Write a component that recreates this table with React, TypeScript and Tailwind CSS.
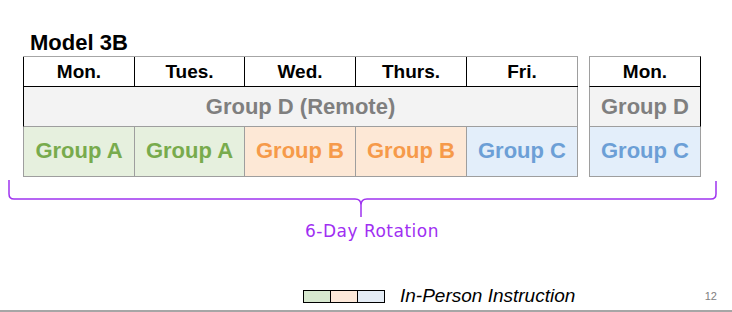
import React from "react";

const F = { fontFamily: '"Liberation Sans", Arial, sans-serif' };

export default function App() {
  return (
    <div className="relative w-[732px] h-[312px] overflow-hidden bg-white flex flex-col" style={F}>
      <div className="pt-[32px] pl-[30px] text-[22px] leading-[22px] font-bold text-black">Model 3B</div>

      <div className="mt-[2px] pl-[23px] flex gap-[11px]">
        {/* Table 1 */}
        <div className="w-[555px] flex flex-col">
          <div className="flex h-[31px] border-t border-b border-t-[#a6a6a6] border-b-black">
            {[
              ["Mon.", "w-[111px] border-l border-black"],
              ["Tues.", "w-[110px] border-l border-black"],
              ["Wed.", "w-[111px] border-l border-black"],
              ["Thurs.", "w-[111px] border-l border-black"],
              ["Fri.", "w-[112px] border-l border-r border-l-black border-r-[#9e9e9e]"],
            ].map(([t, c]) => (
              <div key={t} className={`${c} flex items-center justify-center text-[19px] leading-[19px] font-bold text-black`}>
                {t}
              </div>
            ))}
          </div>
          <div className="h-[40px] bg-[#f3f3f3] border-l border-r border-b border-l-black border-r-[#9e9e9e] border-b-[#9e9e9e] flex items-center justify-center text-[22px] leading-[22px] font-bold text-[#7f7f7f]">
            Group D (Remote)
          </div>
          <div className="flex h-[50px] border-b border-[#9e9e9e]">
            <div className="w-[111px] border-l border-[#9e9e9e] bg-[#e6f0de] flex items-center justify-center pb-[2px] text-[22px] leading-[22px] font-bold text-[#78ab4d]">Group A</div>
            <div className="w-[110px] border-l border-[#9e9e9e] bg-[#e6f0de] flex items-center justify-center pb-[2px] text-[22px] leading-[22px] font-bold text-[#78ab4d]">Group A</div>
            <div className="w-[111px] border-l border-[#9e9e9e] bg-[#fde8d6] flex items-center justify-center pb-[2px] text-[22px] leading-[22px] font-bold text-[#f69a4a]">Group B</div>
            <div className="w-[111px] border-l border-[#9e9e9e] bg-[#fde8d6] flex items-center justify-center pb-[2px] text-[22px] leading-[22px] font-bold text-[#f69a4a]">Group B</div>
            <div className="w-[112px] border-l border-r border-[#9e9e9e] bg-[#e3eefa] flex items-center justify-center pb-[2px] text-[22px] leading-[22px] font-bold text-[#6c9fd6]">Group C</div>
          </div>
        </div>

        {/* Table 2 */}
        <div className="w-[112px] flex flex-col">
          <div className="h-[31px] border-t border-b border-l border-r border-t-[#a6a6a6] border-b-black border-l-[#9e9e9e] border-r-black flex items-center justify-center text-[19px] leading-[19px] font-bold text-black">
            Mon.
          </div>
          <div className="h-[40px] bg-[#f3f3f3] border-l border-r border-b border-l-[#9e9e9e] border-r-black border-b-[#9e9e9e] flex items-center justify-center text-[22px] leading-[22px] font-bold text-[#7f7f7f]">
            Group D
          </div>
          <div className="h-[50px] bg-[#e3eefa] border-l border-r border-b border-[#9e9e9e] flex items-center justify-center pb-[2px] text-[22px] leading-[22px] font-bold text-[#6c9fd6]">
            Group C
          </div>
        </div>
      </div>

      <svg width="732" height="42" viewBox="0 0 732 42" className="block">
        <path
          d="M9 3 V17 Q9 22 14 22 H355 Q361 22 361 28 V40 M361 28 Q361 22 367 22 H711 Q716 22 716 17 V4"
          fill="none"
          stroke="#9f33f0"
          strokeWidth="1.5"
        />
      </svg>

      <div
        className="mt-[2px] pl-[305px] text-[17px] leading-[20px] tracking-[0.5px] text-[#a02ff2]"
        style={{ fontFamily: '"DejaVu Sans", sans-serif' }}
      >
        6-Day Rotation
      </div>

      <div className="mt-[45px] h-[20px] flex items-center">
        <div className="ml-[303px] flex h-[13px] border border-black">
          <div className="w-[27px] bg-[#d7e8cf] border-r border-black" />
          <div className="w-[27px] bg-[#fde9da] border-r border-black" />
          <div className="w-[26px] bg-[#e4ecf5]" />
        </div>
        <div className="ml-[15px] text-[19px] leading-[20px] italic text-black">In-Person Instruction</div>
        <div className="ml-auto mr-[15px] text-[11px] leading-[11px] text-[#808080]">12</div>
      </div>

      <div className="mt-[4px] h-[2px] bg-[#a6a6a6]" />
    </div>
  );
}
